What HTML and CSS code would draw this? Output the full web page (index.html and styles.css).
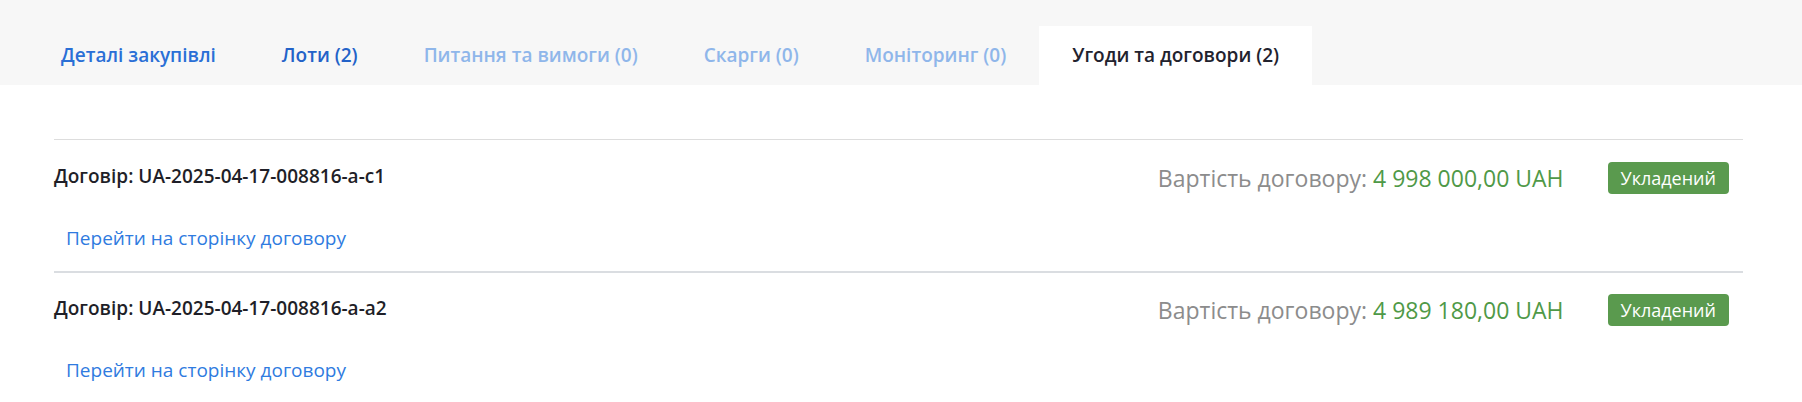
FILE: index.html
```html
<!DOCTYPE html>
<html lang="uk">
<head>
<meta charset="utf-8">
<title>Угоди та договори</title>
<link rel="stylesheet" href="styles.css">
</head>
<body>
<div class="tabbar">
  <nav class="tabs">
    <a class="tab tab-link" href="#">Деталі закупівлі</a>
    <a class="tab tab-link tab-dark" href="#">Лоти (2)</a>
    <span class="tab tab-muted">Питання та вимоги (0)</span>
    <span class="tab tab-muted">Скарги (0)</span>
    <span class="tab tab-muted">Моніторинг (0)</span>
    <span class="tab tab-active">Угоди та договори (2)</span>
  </nav>
</div>
<main class="content">
  <section class="contract">
    <div class="contract-head">
      <div class="contract-title">Договір: UA-2025-04-17-008816-a-c1</div>
      <div class="contract-meta">
        <span class="price-label">Вартість договору: <span class="price-value">4 998 000,00 UAH</span></span>
        <span class="badge">Укладений</span>
      </div>
    </div>
    <a class="contract-link" href="#">Перейти на сторінку договору</a>
  </section>
  <section class="contract contract-next">
    <div class="contract-head">
      <div class="contract-title">Договір: UA-2025-04-17-008816-a-a2</div>
      <div class="contract-meta">
        <span class="price-label">Вартість договору: <span class="price-value">4 989 180,00 UAH</span></span>
        <span class="badge">Укладений</span>
      </div>
    </div>
    <a class="contract-link" href="#">Перейти на сторінку договору</a>
  </section>
</main>
</body>
</html>
```
FILE: styles.css
```css
html, body {
  margin: 0;
  padding: 0;
  background: #ffffff;
  font-family: "Open Sans", "Noto Sans", sans-serif;
}

.tabbar {
  background: #f7f7f7;
  height: 85px;
  display: flex;
  align-items: flex-end;
}

.tabs {
  display: flex;
  padding-left: 28px;
}

.tab {
  display: block;
  height: 59px;
  line-height: 59px;
  padding: 0 33px;
  font-size: 19px;
  font-weight: 600;
  text-decoration: none;
  white-space: nowrap;
}

.tab-link {
  color: #2a6fd6;
}

.tab-dark {
  color: #2362c8;
}

.tab-muted {
  color: #8fb6ea;
}

.tab-active {
  background: #ffffff;
  color: #22222e;
}

.content {
  padding: 54px 59px 0 54px;
}

.contract {
  border-top: 1px solid #dddddd;
  padding: 22px 0 20px;
}

.contract-next {
  border-top: 2px solid #dadde1;
  padding-top: 21px;
}

.contract-head {
  display: flex;
  justify-content: space-between;
  align-items: center;
  height: 32px;
}

.contract-title {
  font-size: 19px;
  font-weight: 600;
  color: #1f1f28;
  margin-bottom: 4px;
}

.contract-meta {
  display: flex;
  align-items: center;
  gap: 44px;
  padding-right: 14px;
}

.price-label {
  font-size: 23px;
  font-weight: 400;
  color: #8c8c8c;
}

.price-value {
  color: #4f9947;
}

.badge {
  display: block;
  height: 32px;
  line-height: 32px;
  padding: 0 13px;
  border-radius: 4px;
  background: #5a9a4e;
  color: #ffffff;
  font-size: 18px;
}

.contract-link {
  display: inline-block;
  margin: 31px 0 0 12px;
  line-height: 26px;
  font-size: 19px;
  color: #2f7be0;
  text-decoration: none;
}
```
